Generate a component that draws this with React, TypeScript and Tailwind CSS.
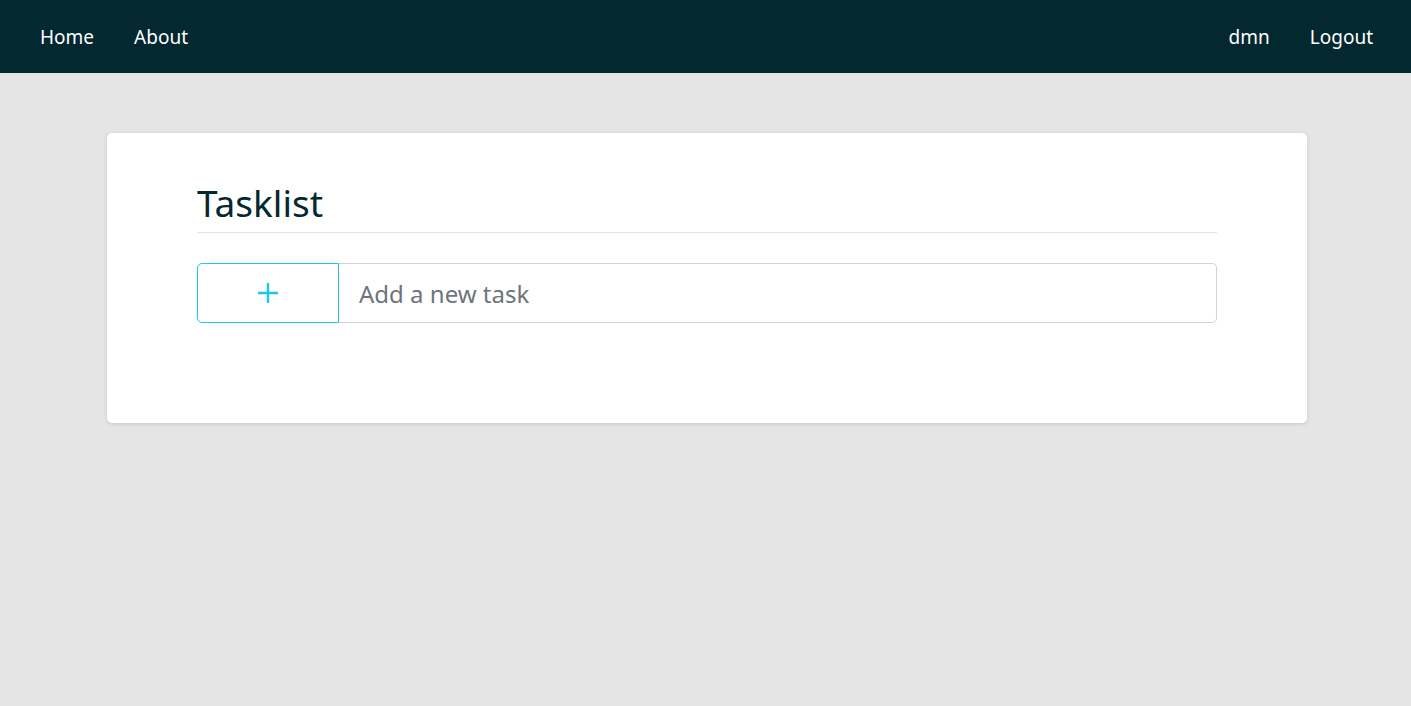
import React from "react";

export default function App() {
  return (
    <div className="min-h-[706px] bg-[#e5e5e5]" style={{ fontFamily: '"Noto Sans", "Open Sans", sans-serif' }}>
      <nav className="h-[73px] bg-[#032830] flex items-center justify-between pl-[40px] pr-[38px] pt-[2px] text-[19px] text-white">
        <div className="flex gap-[40px]">
          <a>Home</a>
          <a>About</a>
        </div>
        <div className="flex gap-[40px]">
          <a>dmn</a>
          <a>Logout</a>
        </div>
      </nav>
      <div className="pt-[60px] pl-[107px]">
        <div className="w-[1200px] h-[290px] bg-white rounded-[5px] shadow-[0_1px_4px_rgba(0,0,0,0.12)] px-[90px] pt-[48px]">
          <h1 className="text-[37px] leading-[1.2] text-[#032830] pb-[7px] border-b border-[#e3e3e3]">Tasklist</h1>
          <div className="mt-[30px] flex h-[60px]">
            <button className="w-[142px] h-full border border-[#1cc8ea] rounded-l-[5px] flex items-center justify-center text-[#1cc8ea]">
              <svg width="22" height="22" viewBox="0 0 22 22" fill="none" stroke="currentColor" strokeWidth="2.4">
                <path d="M11 1v20M1 11h20" />
              </svg>
            </button>
            <input
              className="flex-1 h-full border border-l-0 border-[#ced4da] rounded-r-[5px] px-[20px] text-[24px] text-[#495057] placeholder:text-[#6c757d] outline-none"
              placeholder="Add a new task"
            />
          </div>
        </div>
      </div>
    </div>
  );
}
